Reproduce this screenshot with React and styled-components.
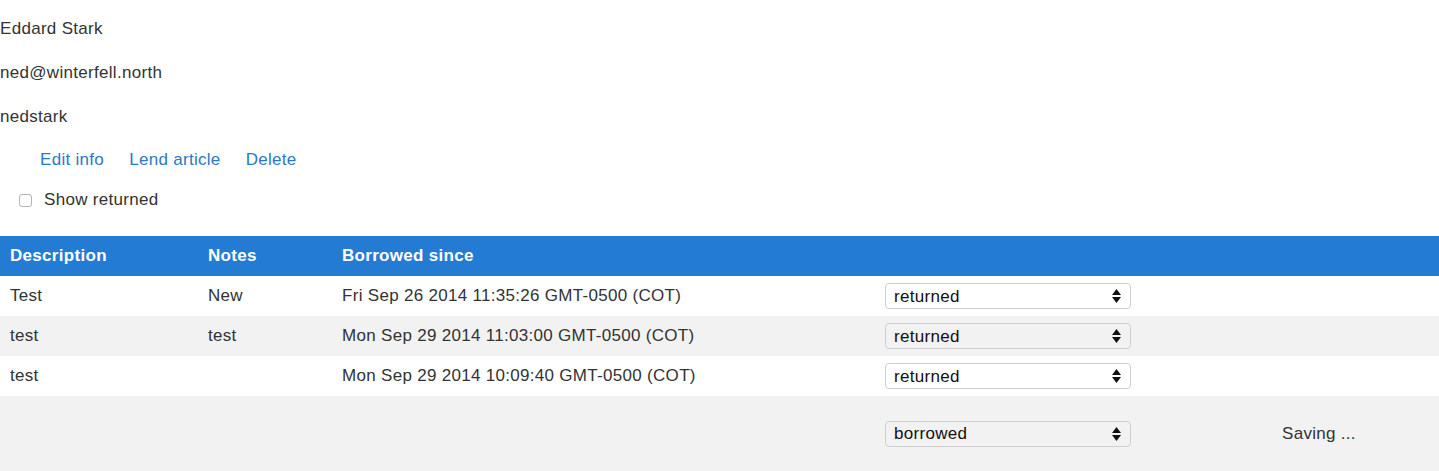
import React from "react";
import styled, { createGlobalStyle } from "styled-components";

const GlobalStyle = createGlobalStyle`
  html, body {
    margin: 0;
    padding: 0;
    background: #ffffff;
  }
  body {
    font-family: "Liberation Sans", Arial, Helvetica, sans-serif;
    font-size: 17px;
    letter-spacing: 0.3px;
    color: #333333;
  }
`;

const Page = styled.div`
  padding-top: 7px;
`;

const InfoLine = styled.div`
  height: 44px;
  line-height: 44px;
`;

const Actions = styled.div`
  display: flex;
  gap: 25px;
  padding-left: 40px;
  height: 42px;
  align-items: center;
`;

const ActionLink = styled.a`
  color: #2a78c8;
  text-decoration: none;
  cursor: pointer;
`;

const CheckRow = styled.label`
  display: flex;
  align-items: center;
  gap: 12px;
  padding-left: 19px;
  height: 38px;
`;

const Box = styled.input`
  appearance: none;
  margin: 0;
  width: 13px;
  height: 13px;
  border: 1px solid #b4b4b4;
  border-radius: 3px;
  background: #fff;
`;

const Table = styled.table`
  width: 100%;
  border-collapse: collapse;
  margin-top: 17px;
`;

const HeadCell = styled.th`
  background: #237bd3;
  color: #ffffff;
  font-weight: bold;
  text-align: left;
  height: 40px;
  padding: 0 10px;
  width: ${({ $w }) => $w || "auto"};
`;

const Row = styled.tr`
  background: ${({ $alt }) => ($alt ? "#f2f2f2" : "#ffffff")};
`;

const Cell = styled.td`
  height: ${({ $tall }) => ($tall ? "75px" : "40px")};
  padding: 0 10px;
  vertical-align: middle;
  line-height: 22px;
`;

const SelectWrap = styled.div`
  position: relative;
  width: 246px;
`;

const Select = styled.select`
  appearance: none;
  width: 246px;
  height: 26px;
  padding: 0 8px;
  border: 1px solid #cfcfcf;
  border-radius: 4px;
  background: transparent;
  font-family: inherit;
  font-size: 17px;
  letter-spacing: 0.3px;
  color: #111111;
`;

const Arrows = styled.svg`
  position: absolute;
  right: 10px;
  top: 6px;
  pointer-events: none;
`;

const Status = styled.span`
  color: #333333;
`;

const StatusSelect = ({ value }) => (
  <SelectWrap>
    <Select defaultValue={value}>
      <option value="borrowed">borrowed</option>
      <option value="returned">returned</option>
    </Select>
    <Arrows width="9" height="14" viewBox="0 0 9 14">
      <path d="M4.5 0 L9 6 L0 6 Z" fill="#111" />
      <path d="M0 8 L9 8 L4.5 14 Z" fill="#111" />
    </Arrows>
  </SelectWrap>
);

const rows = [
  { desc: "Test", notes: "New", since: "Fri Sep 26 2014 11:35:26 GMT-0500 (COT)", state: "returned" },
  { desc: "test", notes: "test", since: "Mon Sep 29 2014 11:03:00 GMT-0500 (COT)", state: "returned" },
  { desc: "test", notes: "", since: "Mon Sep 29 2014 10:09:40 GMT-0500 (COT)", state: "returned" },
];

export default function App() {
  return (
    <Page>
      <GlobalStyle />
      <InfoLine>Eddard Stark</InfoLine>
      <InfoLine>ned@winterfell.north</InfoLine>
      <InfoLine>nedstark</InfoLine>
      <Actions>
        <ActionLink>Edit info</ActionLink>
        <ActionLink>Lend article</ActionLink>
        <ActionLink>Delete</ActionLink>
      </Actions>
      <CheckRow>
        <Box type="checkbox" />
        Show returned
      </CheckRow>
      <Table>
        <thead>
          <tr>
            <HeadCell $w="178px">Description</HeadCell>
            <HeadCell $w="114px">Notes</HeadCell>
            <HeadCell $w="523px">Borrowed since</HeadCell>
            <HeadCell $w="377px"></HeadCell>
            <HeadCell></HeadCell>
          </tr>
        </thead>
        <tbody>
          {rows.map((r, i) => (
            <Row key={i} $alt={i % 2 === 1}>
              <Cell>{r.desc}</Cell>
              <Cell>{r.notes}</Cell>
              <Cell>{r.since}</Cell>
              <Cell>
                <StatusSelect value={r.state} />
              </Cell>
              <Cell></Cell>
            </Row>
          ))}
          <Row $alt>
            <Cell $tall></Cell>
            <Cell $tall></Cell>
            <Cell $tall></Cell>
            <Cell $tall>
              <StatusSelect value="borrowed" />
            </Cell>
            <Cell $tall>
              <Status>Saving ...</Status>
            </Cell>
          </Row>
        </tbody>
      </Table>
    </Page>
  );
}
